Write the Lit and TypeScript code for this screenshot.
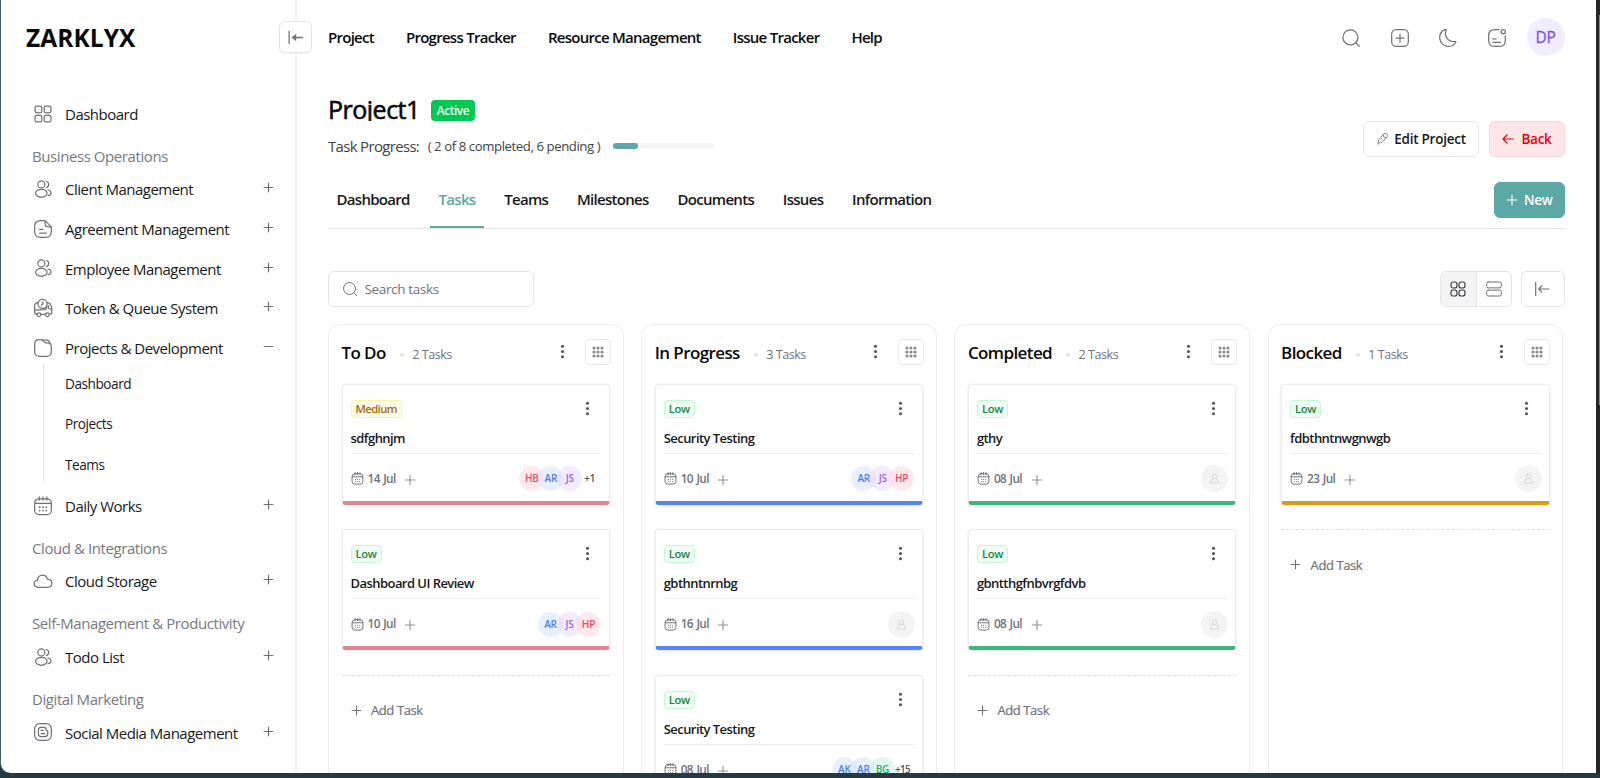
import { LitElement, html, css, svg } from 'lit';
import { customElement, property } from 'lit/decorators.js';
import { classMap } from 'lit/directives/class-map.js';

interface NavItem {
  label: string;
  icon: string;
  open?: boolean;
  children?: string[];
}

interface NavGroup {
  title?: string;
  items: NavItem[];
}

interface Task {
  title: string;
  priority: 'Low' | 'Medium';
  date: string;
  people: string[];
  more?: string;
}

interface Column {
  name: string;
  color: string;
  tasks: Task[];
}

const navGroups: NavGroup[] = [
  { items: [{ label: 'Dashboard', icon: 'grid' }] },
  {
    title: 'Business Operations',
    items: [
      { label: 'Client Management', icon: 'users' },
      { label: 'Agreement Management', icon: 'file' },
      { label: 'Employee Management', icon: 'users' },
      { label: 'Token & Queue System', icon: 'truck' },
      { label: 'Projects & Development', icon: 'folder', open: true, children: ['Dashboard', 'Projects', 'Teams'] },
      { label: 'Daily Works', icon: 'calendar' },
    ],
  },
  { title: 'Cloud & Integrations', items: [{ label: 'Cloud Storage', icon: 'cloud' }] },
  { title: 'Self-Management & Productivity', items: [{ label: 'Todo List', icon: 'users' }] },
  { title: 'Digital Marketing', items: [{ label: 'Social Media Management', icon: 'blog' }] },
];

const topLinks = ['Project', 'Progress Tracker', 'Resource Management', 'Issue Tracker', 'Help'];

const tabs = ['Dashboard', 'Tasks', 'Teams', 'Milestones', 'Documents', 'Issues', 'Information'];

const columns: Column[] = [
  {
    name: 'To Do',
    color: 'rose',
    tasks: [
      { title: 'sdfghnjm', priority: 'Medium', date: '14 Jul', people: ['HB', 'AR', 'JS'], more: '+1' },
      { title: 'Dashboard UI Review', priority: 'Low', date: '10 Jul', people: ['AR', 'JS', 'HP'] },
    ],
  },
  {
    name: 'In Progress',
    color: 'blue',
    tasks: [
      { title: 'Security Testing', priority: 'Low', date: '10 Jul', people: ['AR', 'JS', 'HP'] },
      { title: 'gbthntnrnbg', priority: 'Low', date: '16 Jul', people: [] },
      { title: 'Security Testing', priority: 'Low', date: '08 Jul', people: ['AK', 'AR', 'BG'], more: '+15' },
    ],
  },
  {
    name: 'Completed',
    color: 'green',
    tasks: [
      { title: 'gthy', priority: 'Low', date: '08 Jul', people: [] },
      { title: 'gbntthgfnbvrgfdvb', priority: 'Low', date: '08 Jul', people: [] },
    ],
  },
  {
    name: 'Blocked',
    color: 'amber',
    tasks: [{ title: 'fdbthntnwgnwgb', priority: 'Low', date: '23 Jul', people: [] }],
  },
];

const icons = {
  grid: svg`<rect x="2.500" y="2.500" width="8" height="8" rx="1.800"/><rect x="13.500" y="2.500" width="8" height="8" rx="1.800"/><rect x="2.500" y="13.500" width="8" height="8" rx="1.800"/><rect x="13.500" y="13.500" width="8" height="8" rx="1.800"/>`,
  users: svg`<circle cx="10" cy="6.500" r="4.200"/><path d="M16 3a3.700 3.700 0 0 1 0 7.200"/><ellipse cx="10" cy="17.200" rx="6.900" ry="4.700"/><path d="M18 13.200c2.200.4 3.600 1.700 3.600 3.400 0 1.600-1.300 2.900-3.300 3.300"/>`,
  file: svg`<path d="M14.500 2H9C4 2 2 4 2 9v6c0 5 2 7 7 7h6c5 0 7-2 7-7V9.500L14.500 2v3.500c0 3 1 4 4 4H22"/><path d="M8 12.500h4M8 17h8"/>`,
  truck: svg`<circle cx="11.500" cy="7" r="5.500"/><path d="M11.800 4.500v2.800l-1.800 1.200M6 5.500C3.500 5.500 2 7 2 9v8c0 1.500 1 2.500 3 2.500M9.500 19.500h6M17 5.500l1.800.3c.8.2 1.300.6 1.700 1.300L22.500 11v6c0 1.500-1 2.500-2.500 2.500M18.500 9v2.500c0 1 .5 1.500 1.500 1.500h2.500M2.200 14.500c4 0 7 0 12-.5 1.500-.4 2.300-1.500 2.300-4"/><circle cx="7.200" cy="20" r="2.200"/><circle cx="17.300" cy="20" r="2.200"/>`,
  folder: svg`<path d="M2 16V7.500C2 3.500 3.500 2 7.500 2h1.800c1.500 0 2 .5 2.800 1.500L13.500 5c.6.700 1 .8 1.900.8h1.800c3.500 0 4.800 1.600 4.800 5V16c0 4.500-1.500 6-6 6H8c-4.500 0-6-1.500-6-6z"/><path d="M11 2.500h5c2.500 0 4 1 4.500 4"/>`,
  calendar: svg`<path d="M7.500 1v4M12 1v4M16.500 1v4M2.200 8.800h19.600"/><rect x="2" y="3.300" width="20" height="19" rx="5"/><path class="dots" d="M8 13.500h.01M12 13.500h.01M16 13.500h.01M8 17.500h.01M12 17.500h.01M16 17.500h.01"/>`,
  cloud: svg`<path d="M6 19.500c-2.800 0-4.700-1.700-4.700-4.100 0-2.500 1.700-4 4.100-4.200C5.300 7.500 7.700 5 11.200 5c3.200 0 5.400 2 5.900 4.700 3.300.2 5.500 2.200 5.500 5 0 2.900-2.100 4.800-4.900 4.800z"/>`,
  blog: svg`<rect x="2" y="2" width="20" height="20" rx="6"/><path d="M9.500 6.500h3.200c2 0 3.300 1.200 3.300 3 0 .8.500 1 1 1.200.4.200.7.500.7 1.200v2.300c0 2-1.300 3.300-3.300 3.300H9.500c-2 0-3-1-3-3v-5c0-2 1-3 3-3z"/><path d="M9.800 10h2.700M9.800 14h4.400"/>`,
  search: svg`<circle cx="11.300" cy="11.300" r="9"/><path d="M18 18l4 4"/>`,
  addSquare: svg`<rect x="2" y="2" width="20" height="20" rx="5.500"/><path d="M12 7.200v9.600M7.200 12h9.600"/>`,
  moon: svg`<path d="M2.100 12.400c.4 5.200 4.700 9.400 9.900 9.600 3.700.2 7-1.500 9-4.300.8-1.100.4-1.900-1-1.600-.7.100-1.400.2-2.100.1C12.900 16 8.900 11.800 8.900 6.900c0-1.300.3-2.600.8-3.700.6-1.300-.1-1.900-1.400-1.300C4.200 3.600 1.700 7.800 2.100 12.400z"/>`,
  note: svg`<path d="M14.500 2H9C4 2 2 4 2 9v6c0 5 2 7 7 7h6c5 0 7-2 7-7V9.500M7 13h4M7 17.300h9"/><circle cx="19.500" cy="4.500" r="2.500"/>`,
  collapse: svg`<path d="M3 3.500v17M22 12H8"/><path class="solid" d="M13 6.800v10.400L6.500 12z"/>`,
  collapseThin: svg`<path d="M2.500 2.500v19M22.500 12H7M11.500 7.500L7 12l4.500 4.500"/>`,
  pencil: svg`<path d="M13.300 3.600L5 12.300c-.3.300-.6 1-.7 1.400l-.4 3.200c-.1 1.200.7 2 1.900 1.800l3.200-.6c.4-.1 1.100-.4 1.400-.8l8.200-8.700c1.400-1.500 2-3.200-.2-5.300-2.100-2-3.700-1.300-5.100.3zM12 5.200c.4 2.700 2.600 4.800 5.400 5.100M3.300 18.500c-.8 1.800-.5 3.200 1.500 2.200"/>`,
  back: svg`<path d="M10 4l-8 8 8 8M2 12h20.500"/>`,
  plus: svg`<path d="M12 2.500v19M2.500 12h19"/>`,
  minus: svg`<path d="M2.500 12h19"/>`,
  board: svg`<rect x="1.500" y="1.500" width="9" height="9" rx="3.500"/><rect x="13.500" y="1.500" width="9" height="9" rx="3.500"/><rect x="1.500" y="13.500" width="9" height="9" rx="3.500"/><rect x="13.500" y="13.500" width="9" height="9" rx="3.500"/>`,
  rows: svg`<rect x="1" y="1.500" width="22" height="8.800" rx="2.300"/><rect x="1" y="13.700" width="22" height="8.800" rx="2.300"/>`,
  more: svg`<g class="solid"><circle cx="12" cy="2.500" r="2.800"/><circle cx="12" cy="12" r="2.800"/><circle cx="12" cy="21.500" r="2.800"/></g>`,
  drag: svg`<g class="solid">${[4, 12, 20].map(y => [4, 12, 20].map(x => svg`<circle cx=${x} cy=${y} r="3.200"/>`))}</g>`,
  person: svg`<circle cx="12" cy="7.500" r="5"/><path d="M7.500 13.500c-3 1-4.500 3.500-4.500 7.500 0 .7.300 1 1 1h16c.7 0 1-.3 1-1 0-4-1.500-6.500-4.500-7.500"/>`,
};

@customElement('ui-icon')
export class UiIcon extends LitElement {
  @property() name = '';
  @property({ type: Number }) size = 18;
  @property({ type: Number }) stroke = 1.5;

  static get styles() {
    return css`
    :host {
      display: inline-flex;
      flex: none;
    }
    .svg {
      display: block;
      overflow: visible;
      fill: none;
      stroke: currentColor;
      stroke-linecap: round;
      stroke-linejoin: round;
    }
    .solid {
      fill: currentColor;
      stroke: none;
    }
    .dots {
      stroke-width: 2.2;
    }
    `
  }

  render() {
    return html`
    <svg class="svg" width=${this.size} height=${this.size} viewBox="0 0 24 24" stroke-width=${this.stroke}>
      ${icons[this.name]}
    </svg>
    `;
  }
}

@customElement('side-nav')
export class SideNav extends LitElement {
  static get styles() {
    return css`
    :host {
      display: block;
      flex: none;
      box-sizing: border-box;
      width: 296px;
      border-right: 2px solid #f3f3f4;
    }
    .logo {
      height: 76px;
      padding-left: 25px;
      margin-bottom: 18px;
      line-height: 76px;
      font-size: 24.5px;
      font-weight: 700;
      letter-spacing: 0.05px;
      color: #09090b;
    }
    .title {
      height: 36px;
      padding-left: 31px;
      line-height: 45px;
      letter-spacing: -0.42px;
      color: #78787f;
    }
    .item {
      display: flex;
      align-items: center;
      height: 39.6px;
      padding: 0 21px 0 32px;
      color: #18181b;
    }
    .icon {
      color: #71717a;
      margin-top: -0.5px;
    }
    .label {
      flex: 1;
      margin-left: 12px;
      white-space: nowrap;
      letter-spacing: -0.5px;
    }
    .toggle {
      color: #71717a;
      margin-top: -3px;
    }
    .children {
      height: 118.5px;
      margin: -4px 0 4px 42px;
      border-left: 1px solid #e4e4e7;
    }
    .child {
      height: 40.8px;
      padding-left: 21px;
      line-height: 40px;
      font-size: 13.6px;
      letter-spacing: -0.45px;
      color: #18181b;
    }
    `
  }

  renderItem(item: NavItem, top: boolean) {
    return html`
    <div class="item">
      <ui-icon class="icon" name=${item.icon} size="20"></ui-icon>
      <span class="label">${item.label}</span>
      ${top ? '' : html`<ui-icon class="toggle" name=${item.open ? 'minus' : 'plus'} size="11" stroke="2.7"></ui-icon>`}
    </div>
    ${item.children ? html`
      <div class="children">
        ${item.children.map(child => html`<div class="child">${child}</div>`)}
      </div>` : ''}
    `;
  }

  render() {
    return html`
    <div class="logo">ZARKLYX</div>
    ${navGroups.map(group => html`
      ${group.title ? html`<div class="title">${group.title}</div>` : ''}
      ${group.items.map(item => this.renderItem(item, !group.title))}
    `)}
    `;
  }
}

@customElement('task-card')
export class TaskCard extends LitElement {
  @property({ attribute: false }) task: Task;
  @property() color = '';

  static get styles() {
    return css`
    :host {
      display: block;
    }
    .card {
      box-sizing: border-box;
      height: 121px;
      padding: 0 8px;
      border: 1px solid #ececee;
      border-bottom: 4px solid;
      border-radius: 4px;
      background: #fff;
      box-shadow: 0 1px 3px rgba(0, 0, 0, 0.12);
    }
    .rose { border-bottom-color: #d98695; }
    .blue { border-bottom-color: #5686ef; }
    .green { border-bottom-color: #3fb57b; }
    .amber { border-bottom-color: #d49e1a; }
    .top {
      display: flex;
      justify-content: space-between;
      align-items: center;
      height: 47px;
      padding-right: 7.5px;
      color: #52525b;
    }
    .badge {
      box-sizing: border-box;
      height: 18px;
      margin-top: 1px;
      padding: 0 4px;
      border: 1px solid;
      border-radius: 4px;
      line-height: 16px;
      font-size: 11.2px;
      font-weight: 600;
      letter-spacing: -0.3px;
    }
    .low {
      color: #1a8545;
      background: #f0fdf4;
      border-color: #c3f7d5;
    }
    .medium {
      color: #a8690c;
      background: #fefce8;
      border-color: #fef3a5;
      letter-spacing: -0.55px;
    }
    .name {
      height: 21px;
      line-height: 12px;
      font-size: 13px;
      font-weight: 600;
      letter-spacing: -0.55px;
      color: #18181b;
      border-bottom: 1px solid #ececee;
    }
    .bottom {
      display: flex;
      align-items: center;
      box-sizing: border-box;
      height: 47px;
      padding-top: 3px;
      color: #71717a;
    }
    .date {
      margin: -2px 8.5px 0 4px;
      font-size: 11.8px;
      font-weight: 600;
      letter-spacing: -0.62px;
      word-spacing: 1px;
      color: #71717a;
    }
    .add {
      margin-top: 2px;
      color: #8d93a3;
    }
    .people {
      display: flex;
      align-items: center;
      margin-left: auto;
    }
    .person {
      width: 25px;
      height: 25px;
      margin-left: -6px;
      border-radius: 50%;
      line-height: 25px;
      text-align: center;
      font-size: 10px;
      font-weight: 600;
      letter-spacing: -0.2px;
    }
    .HB, .HP { color: #ee4562; background: rgba(255, 215, 222, 0.55); }
    .AR, .AK { color: #4a80ee; background: rgba(215, 228, 255, 0.58); }
    .JS { color: #a35be8; background: rgba(232, 215, 255, 0.5); }
    .BG { color: #22b07a; background: rgba(205, 243, 228, 0.58); }
    .more {
      margin: 0 6px 0 2px;
      font-size: 9.8px;
      font-weight: 600;
      color: #52525b;
    }
    .more-wide {
      margin: 0 4px 0 0;
      letter-spacing: -0.5px;
    }
    .empty {
      display: flex;
      align-items: center;
      justify-content: center;
      width: 27px;
      height: 27px;
      margin-right: -1px;
      border-radius: 50%;
      background: #f3f3f4;
      color: #d7d8dd;
    }
    `
  }

  renderPeople() {
    const { people, more } = this.task;
    if (!people.length) {
      return html`<span class="empty"><ui-icon name="person" size="11" stroke="2.2"></ui-icon></span>`;
    }
    return html`
      ${people.map(person => html`<span class="person ${person}">${person}</span>`)}
      ${more ? html`<span class="${classMap({ 'more': true, 'more-wide': more.length > 2 })}">${more}</span>` : ''}
    `;
  }

  render() {
    return html`
    <div class="card ${this.color}">
      <div class="top">
        <span class="badge ${this.task.priority.toLowerCase()}">${this.task.priority}</span>
        <ui-icon name="more" size="13"></ui-icon>
      </div>
      <div class="name">${this.task.title}</div>
      <div class="bottom">
        <ui-icon name="calendar" size="13" stroke="1.800"></ui-icon>
        <span class="date">${this.task.date}</span>
        <ui-icon class="add" name="plus" size="12" stroke="2.200"></ui-icon>
        <div class="people">${this.renderPeople()}</div>
      </div>
    </div>
    `;
  }
}

@customElement('board-column')
export class BoardColumn extends LitElement {
  @property({ attribute: false }) column: Column;

  static get styles() {
    return css`
    :host {
      display: block;
      box-sizing: border-box;
      height: 600px;
      padding: 0 12.5px;
      border: 1px solid #ececee;
      border-radius: 12px;
    }
    .head {
      display: flex;
      align-items: center;
      height: 56px;
      margin-bottom: 2.5px;
    }
    .name {
      margin-top: -1px;
      font-size: 17px;
      font-weight: 600;
      letter-spacing: -0.6px;
      color: #09090b;
    }
    .dot {
      width: 4px;
      height: 4px;
      margin: 3px 8.5px 0 14px;
      border-radius: 50%;
      background: #e4e4e7;
    }
    .count {
      flex: 1;
      margin-top: 2px;
      font-size: 12.5px;
      letter-spacing: -0.45px;
      color: #71717a;
    }
    .menu {
      margin: -3px 16px 0 0;
      color: #52525b;
    }
    .drag {
      display: flex;
      align-items: center;
      justify-content: center;
      box-sizing: border-box;
      width: 26px;
      height: 26px;
      margin: -3px -0.5px 0 0;
      border: 1px solid #e8e8ea;
      border-radius: 4px;
      color: #8b8b93;
    }
    .cards {
      display: grid;
      gap: 24.6px;
    }
    .add {
      display: flex;
      align-items: center;
      height: 69px;
      margin-top: 24.5px;
      padding-left: 9px;
      border-top: 1px dashed #e0e0e3;
      gap: 9.5px;
      font-size: 13px;
      letter-spacing: -0.4px;
      -webkit-text-stroke: 0.2px;
      color: #71717a;
    }
    `
  }

  render() {
    return html`
    <div class="head">
      <span class="name">${this.column.name}</span>
      <span class="dot"></span>
      <span class="count">${this.column.tasks.length} Tasks</span>
      <ui-icon class="menu" name="more" size="13"></ui-icon>
      <span class="drag"><ui-icon name="drag" size="12"></ui-icon></span>
    </div>
    <div class="cards">
      ${this.column.tasks.map(task => html`<task-card .task=${task} color=${this.column.color}></task-card>`)}
    </div>
    <div class="add"><ui-icon name="plus" size="11" stroke="2.400"></ui-icon>Add Task</div>
    `;
  }
}

@customElement('app-root')
export class AppRoot extends LitElement {
  private activeTab = 'Tasks';
  private done = 2;
  private total = 8;

  static get styles() {
    return css`
    :host {
      display: flex;
      flex-wrap: wrap;
      box-sizing: border-box;
      width: 1600px;
      height: 778px;
      overflow: hidden;
      background: #263840;
      font-family: "Open Sans", "Noto Sans", sans-serif;
      font-size: 15px;
      letter-spacing: -0.25px;
      color: #18181b;
    }
    .window {
      position: relative;
      display: flex;
      box-sizing: border-box;
      width: 1596px;
      height: 773px;
      border-left: 1px solid #48606c;
      border-bottom-left-radius: 10px;
      overflow: hidden;
      background: #fff;
    }
    .scroll {
      box-sizing: border-box;
      width: 4px;
      height: 773px;
      padding: 15px 0 0 3px;
      background: #262626;
    }
    .thumb {
      height: 390px;
      background: #8a8a8a;
    }
    .collapse {
      position: absolute;
      left: 278px;
      top: 21px;
      display: flex;
      align-items: center;
      justify-content: center;
      box-sizing: border-box;
      width: 33px;
      height: 32px;
      border: 1px solid #e4e4e7;
      border-radius: 6px;
      background: #fff;
      box-shadow: 0 1px 2px rgba(0, 0, 0, 0.06);
      color: #71717a;
    }
    .main {
      flex: 1;
      min-width: 0;
      padding: 0 31px;
    }
    .topbar {
      display: flex;
      align-items: center;
      height: 76px;
    }
    .links {
      display: flex;
      flex: 1;
      gap: 32px;
      margin-top: -2px;
      font-weight: 600;
      letter-spacing: -0.73px;
      color: #09090b;
    }
    .tools {
      display: flex;
      align-items: center;
      gap: 28.5px;
      color: #71717a;
    }
    .avatar {
      width: 38px;
      height: 38px;
      margin: -2px 0.5px 0 -8.5px;
      border-radius: 50%;
      background: #f1ecfe;
      color: #8150f0;
      text-align: center;
      line-height: 38px;
      font-size: 15.5px;
      -webkit-text-stroke: 0.3px;
    }
    .project {
      display: flex;
      justify-content: space-between;
      height: 97px;
    }
    .heading {
      display: flex;
      gap: 11.5px;
      margin-top: 19px;
    }
    .name {
      height: 26px;
      overflow: hidden;
      line-height: 29px;
      font-size: 25px;
      letter-spacing: -0.5px;
      -webkit-text-stroke: 0.6px;
      color: #09090b;
    }
    .status {
      height: 21px;
      margin-top: 5px;
      padding: 0 5.5px;
      border-radius: 4px;
      background: #00c951;
      color: #fff;
      line-height: 21px;
      font-size: 11.8px;
      font-weight: 600;
      letter-spacing: -0.4px;
    }
    .progress {
      display: flex;
      align-items: center;
      margin-top: 15px;
      letter-spacing: -0.68px;
      color: #3f3f46;
    }
    .detail {
      margin: 0 12.5px 0 8.5px;
      font-size: 13.2px;
      letter-spacing: -0.43px;
    }
    .bar {
      width: 101px;
      height: 6px;
      margin-top: -1px;
      border-radius: 3px;
      background: #f3f3f4;
    }
    .fill {
      height: 6px;
      border-radius: 3px;
      background: #5ba8a6;
    }
    .actions {
      display: flex;
      gap: 10px;
      margin-top: 45px;
    }
    .button {
      display: flex;
      align-items: center;
      justify-content: center;
      box-sizing: border-box;
      height: 36px;
      border: 1px solid #e4e4e7;
      border-radius: 6px;
      font-size: 13.5px;
      font-weight: 600;
      color: #18181b;
    }
    .edit {
      width: 116px;
      gap: 4px;
    }
    .edit-icon {
      color: #71717a;
    }
    .back {
      width: 76px;
      gap: 7px;
      border-color: #fad4d6;
      background: #fde6e7;
      color: #e7000b;
    }
    .new {
      width: 71.5px;
      gap: 6px;
      margin: 9px 0 0 auto;
      border-color: #5ba8a6;
      background: #5ba8a6;
      color: #fff;
    }
    .tabs {
      display: flex;
      gap: 12px;
      height: 55px;
      border-bottom: 1px solid #e4e4e7;
    }
    .tab {
      height: 53px;
      padding: 0 8.3px 0 8.5px;
      border-bottom: 2px solid transparent;
      line-height: 53px;
      font-weight: 600;
      letter-spacing: -0.7px;
      color: #18181b;
    }
    .tab-active {
      color: #5ba8a6;
      border-color: #5ba8a6;
    }
    .toolbar {
      display: flex;
      margin: 42px 0 17px;
      color: #71717a;
    }
    .search {
      display: flex;
      align-items: center;
      box-sizing: border-box;
      width: 206px;
      height: 36px;
      padding-left: 13px;
      gap: 6.5px;
      border: 1px solid #e4e4e7;
      border-radius: 6px;
      font-size: 13.5px;
      letter-spacing: -0.35px;
    }
    .views {
      display: flex;
      box-sizing: border-box;
      width: 72px;
      height: 36px;
      margin: 0 9px 0 auto;
      border: 1px solid #e4e4e7;
      border-radius: 6px;
      overflow: hidden;
    }
    .view {
      display: flex;
      flex: 1;
      align-items: center;
      justify-content: center;
    }
    .view-active {
      background: #f4f4f5;
      border-right: 1px solid #e4e4e7;
      color: #3f3f46;
    }
    .side {
      width: 44px;
      padding-right: 2px;
      color: #71717a;
    }
    .board {
      display: grid;
      grid-template-columns: repeat(4, 295.5px);
      gap: 17.7px;
    }
    `
  }

  render() {
    const percent = this.done / this.total * 100;
    return html`
    <div class="window">
      <side-nav></side-nav>
      <div class="collapse"><ui-icon name="collapse" size="17" stroke="1.800"></ui-icon></div>
      <div class="main">
        <div class="topbar">
          <div class="links">${topLinks.map(link => html`<span>${link}</span>`)}</div>
          <div class="tools">
            <ui-icon name="search" size="20"></ui-icon>
            <ui-icon name="addSquare" size="20"></ui-icon>
            <ui-icon name="moon" size="20"></ui-icon>
            <ui-icon name="note" size="20"></ui-icon>
            <span class="avatar">DP</span>
          </div>
        </div>
        <div class="project">
          <div>
            <div class="heading">
              <span class="name">Project1</span>
              <span class="status">Active</span>
            </div>
            <div class="progress">
              <span>Task Progress:</span>
              <span class="detail">( ${this.done} of ${this.total} completed, ${this.total - this.done} pending )</span>
              <div class="bar"><div class="fill" style="width: ${percent}%"></div></div>
            </div>
          </div>
          <div class="actions">
            <div class="button edit"><ui-icon class="edit-icon" name="pencil" size="14"></ui-icon>Edit Project</div>
            <div class="button back"><ui-icon name="back" size="12" stroke="2.400"></ui-icon>Back</div>
          </div>
        </div>
        <div class="tabs">
          ${tabs.map(tab => html`<div class="${classMap({ 'tab': true, 'tab-active': tab === this.activeTab })}">${tab}</div>`)}
          <div class="button new"><ui-icon name="plus" size="12" stroke="2.400"></ui-icon>New</div>
        </div>
        <div class="toolbar">
          <div class="search"><ui-icon name="search" size="16"></ui-icon>Search tasks</div>
          <div class="views">
            <span class="view view-active"><ui-icon name="board" size="16" stroke="1.800"></ui-icon></span>
            <span class="view"><ui-icon name="rows" size="16"></ui-icon></span>
          </div>
          <div class="button side"><ui-icon name="collapseThin" size="16" stroke="1.800"></ui-icon></div>
        </div>
        <div class="board">
          ${columns.map(column => html`<board-column .column=${column}></board-column>`)}
        </div>
      </div>
    </div>
    <div class="scroll"><div class="thumb"></div></div>
    `;
  }
}
